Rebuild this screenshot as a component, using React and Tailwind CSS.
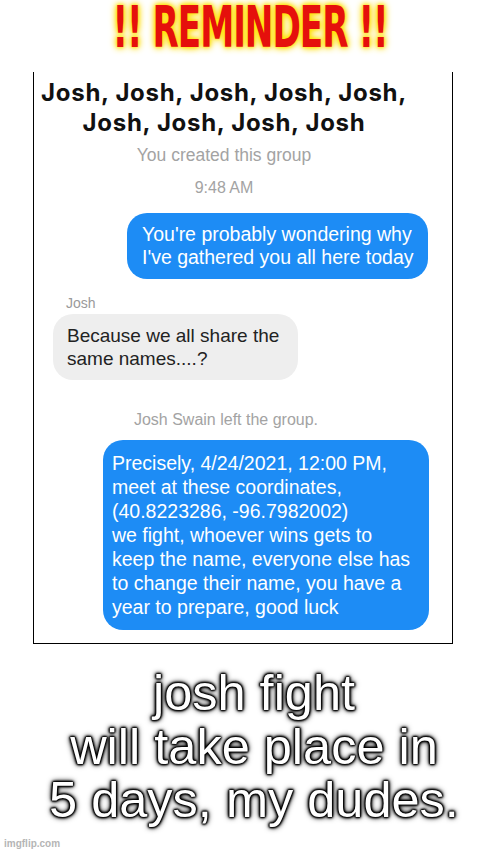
export default function App() {
  const chat = "[font-family:'Liberation_Sans',Arial,sans-serif]";
  return (
    <div className="relative w-[500px] h-[853px] bg-white overflow-hidden flex flex-col">
      {/* title */}
      <div className="h-[72px] pt-[9px] flex justify-center">
        <h1 className="text-[38px] leading-[46px] tracking-[-1px] font-bold text-[#e5100c] scale-y-[1.48] [font-family:'Liberation_Sans_Narrow','DejaVu_Sans_Condensed',sans-serif] [text-shadow:0_0_3px_#ffe600,0_0_5px_#ffe600,0_0_7px_#ffd000]">
          !! REMINDER !!
        </h1>
      </div>

      {/* screenshot */}
      <div className={`ml-[33px] w-[420px] h-[572px] border-l border-r border-b border-black flex flex-col ${chat}`}>
        <div className="pr-[38px] pt-[6px] flex flex-col items-center">
          <div className="text-center text-[24px] leading-[30px] tracking-[0.7px] font-bold text-[#111] [font-family:Inter,sans-serif]">
            <div>Josh, Josh, Josh, Josh, Josh,</div>
            <div>Josh, Josh, Josh, Josh</div>
          </div>
          <div className="mt-[7px] text-[17.5px] leading-[20px] text-[#a3a3a3]">You created this group</div>
          <div className="mt-[14px] text-[16px] leading-[18px] text-[#a3a3a3]">9:48 AM</div>
        </div>

        <div className="mt-[16px] self-end mr-[24px] w-[301px] rounded-[20px] bg-[#1d8cf5] px-[15px] py-[10px] text-[19.5px] leading-[23px] whitespace-nowrap text-white">
          <div>You're probably wondering why</div>
          <div>I've gathered you all here today</div>
        </div>

        <div className="mt-[16px] ml-[32px] text-[14px] leading-[16px] text-[#9a9a9a]">Josh</div>
        <div className="mt-[3px] ml-[19px] w-[245px] rounded-[20px] bg-[#eeeeee] px-[14px] py-[10px] text-[19px] leading-[23px] whitespace-nowrap text-[#222]">
          <div>Because we all share the</div>
          <div>same names....?</div>
        </div>

        <div className="mt-[31px] pr-[34px] text-center text-[16px] leading-[18px] text-[#a3a3a3]">
          Josh Swain left the group.
        </div>

        <div className="mt-[11px] self-end mr-[23px] w-[326px] rounded-[20px] bg-[#1d8cf5] px-[9px] py-[11px] text-[19.5px] leading-[24px] whitespace-nowrap text-white">
          <div>Precisely, 4/24/2021, 12:00 PM,</div>
          <div>meet at these coordinates,</div>
          <div>(40.8223286, -96.7982002)</div>
          <div>we fight, whoever wins gets to</div>
          <div>keep the name, everyone else has</div>
          <div>to change their name, you have a</div>
          <div>year to prepare, good luck</div>
        </div>
      </div>

      {/* caption */}
      <div className="mt-[22px] pl-[8px] text-center text-[50.5px] leading-[53.5px] text-white [font-family:'Liberation_Sans',Arial,sans-serif] [text-shadow:0_0_1px_#000,0_0_1px_#000,0_0_2px_#000,0_0_2px_#000,0_0_2px_#000,0_0_3px_#000,0_0_3px_#000,0_0_4px_#000,0_0_6px_#000]">
        <div>josh fight</div>
        <div>will take place in</div>
        <div>5 days, my dudes.</div>
      </div>

      <div className="absolute left-[4px] bottom-[2px] text-[10px] leading-[14px] font-bold text-[#b5b5b5] [font-family:'Liberation_Sans',Arial,sans-serif]">
        imgflip.com
      </div>
    </div>
  );
}
